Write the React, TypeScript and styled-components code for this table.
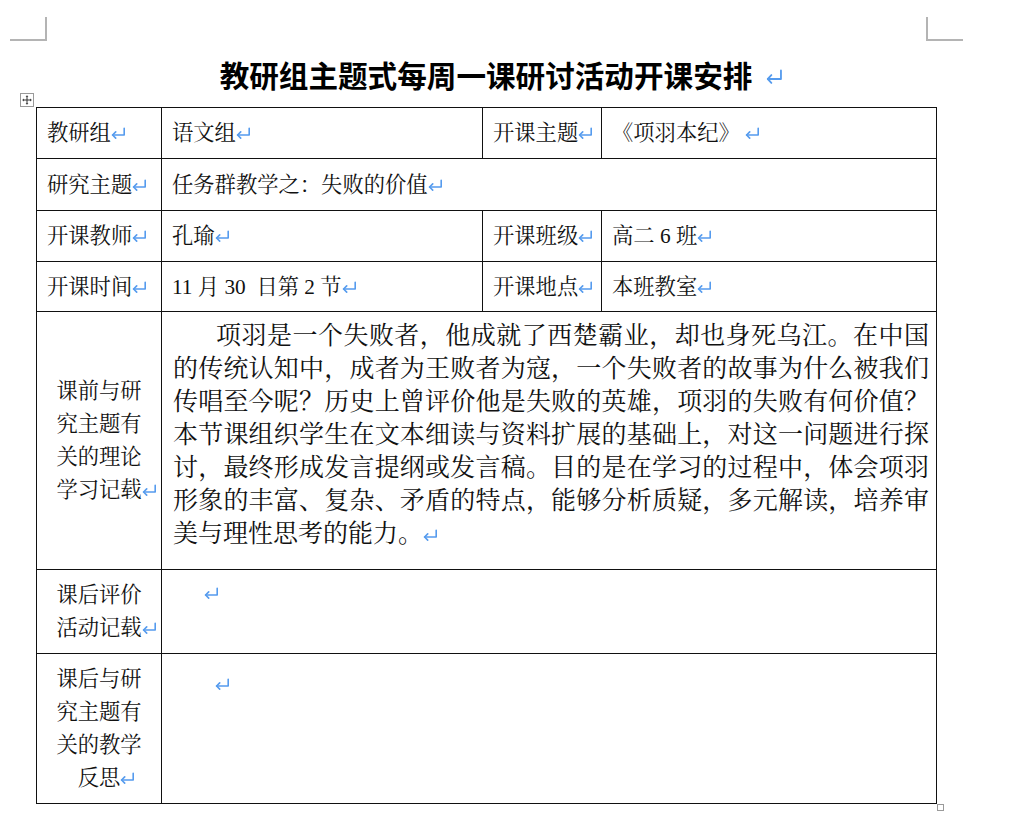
import React from "react";
import styled, { createGlobalStyle } from "styled-components";

const GlobalStyle = createGlobalStyle`
  html, body { margin: 0; padding: 0; background: #ffffff; }
  body {
    font-family: "Liberation Serif", "Noto Serif CJK SC", "Noto Sans CJK SC", serif;
    color: #111;
  }
`;

const Page = styled.div`
  width: 1024px;
  height: 823px;
  padding-top: 17px;
  box-sizing: border-box;
  overflow: hidden;
`;

const MarksRow = styled.div`
  display: flex;
  justify-content: space-between;
  padding: 0 61px 0 10px;
  height: 24px;
`;

const CornerMark = styled.div<{ $side: "left" | "right" }>`
  width: 37px;
  height: 24px;
  box-sizing: border-box;
  border-bottom: 2px solid #b4b4b4;
  ${(p) =>
    p.$side === "left"
      ? "border-right: 2px solid #b4b4b4;"
      : "border-left: 2px solid #b4b4b4;"}
`;

const Content = styled.div`
  margin-left: 36px;
  width: 900px;
`;

const Title = styled.h1`
  margin: 14px 0 0;
  height: 40px;
  line-height: 40px;
  text-align: center;
  font-family: "Noto Sans CJK SC", sans-serif;
  font-weight: 700;
  font-size: 29.6px;
  color: #000;
  white-space: nowrap;
`;

const TableWrap = styled.div`
  position: relative;
  margin-top: 12px;
`;

const MoveHandle = styled.svg`
  position: absolute;
  left: -16px;
  top: -14px;
  width: 14px;
  height: 14px;
`;

const ResizeHandle = styled.div`
  position: absolute;
  left: 901px;
  top: 697px;
  width: 7px;
  height: 7px;
  box-sizing: border-box;
  border: 1px solid #9a9a9a;
  background: #fff;
`;

const Table = styled.table`
  width: 900px;
  border-collapse: collapse;
  table-layout: fixed;
`;

const Row = styled.tr<{ $h: number }>`
  height: ${(p) => p.$h}px;
`;

const Cell = styled.td<{ $center?: boolean }>`
  border: 1.5px solid #111;
  padding: 0 10px;
  font-size: 21.3px;
  line-height: 30px;
  vertical-align: middle;
  text-align: ${(p) => (p.$center ? "center" : "left")};
  color: #111;
  white-space: pre;
`;

const StackLabel = styled.td`
  border: 1.5px solid #111;
  padding: 0 14px;
  font-size: 21.3px;
  line-height: 33px;
  vertical-align: middle;
  text-align: center;
  color: #111;
`;

const ParagraphCell = styled.td`
  border: 1.5px solid #111;
  padding: 7px 7px 0 11px;
  font-size: 25px;
  line-height: 33px;
  vertical-align: top;
  text-align: justify;
  text-indent: 43px;
  color: #111;
`;

const EmptyCell = styled.td<{ $indent: number; $top: number }>`
  border: 1.5px solid #111;
  padding: ${(p) => p.$top}px 10px 0 ${(p) => 11 + p.$indent}px;
  font-size: 21px;
  line-height: 33px;
  vertical-align: top;
`;

const MarkSvg = styled.svg<{ $hang?: boolean; $big?: boolean }>`
  display: inline-block;
  width: ${(p) => (p.$big ? 17 : 15)}px;
  height: ${(p) => (p.$big ? 15 : 12)}px;
  vertical-align: ${(p) => (p.$big ? 3 : 1)}px;
  margin-left: ${(p) => (p.$big ? 14 : 0)}px;
  margin-right: ${(p) => (p.$big ? -31 : p.$hang ? -15 : 0)}px;
  text-indent: 0;
`;

const Ret = ({ hang, big }: { hang?: boolean; big?: boolean }) => (
  <MarkSvg
    $hang={hang}
    $big={big}
    viewBox="0 0 15 12"
    preserveAspectRatio="none"
    fill="none"
    stroke="#559bee"
    strokeWidth={1.6}
    strokeLinecap="round"
    strokeLinejoin="round"
  >
    <path d="M13.2 1.2 V8 H1.6" />
    <path d="M4.7 4.9 L1.6 8 L4.7 11.1" />
  </MarkSvg>
);

export default function App() {
  return (
    <>
      <GlobalStyle />
      <Page>
        <MarksRow>
          <CornerMark $side="left" />
          <CornerMark $side="right" />
        </MarksRow>
        <Content>
          <Title>
            教研组主题式每周一课研讨活动开课安排
            <Ret big />
          </Title>
          <TableWrap>
            <MoveHandle viewBox="0 0 14 14">
              <rect x="0.5" y="0.5" width="13" height="13" fill="#fff" stroke="#9a9a9a" />
              <path d="M7 3 V11 M3 7 H11" stroke="#333" strokeWidth="1" />
              <path d="M7 2.2 L5.6 3.8 H8.4 Z M7 11.8 L5.6 10.2 H8.4 Z M2.2 7 L3.8 5.6 V8.4 Z M11.8 7 L10.2 5.6 V8.4 Z" fill="#333" />
            </MoveHandle>
            <Table>
              <colgroup>
                <col style={{ width: 125 }} />
                <col style={{ width: 321 }} />
                <col style={{ width: 119 }} />
                <col style={{ width: 335 }} />
              </colgroup>
              <tbody>
                <Row $h={51}>
                  <Cell>
                    教研组<Ret />
                  </Cell>
                  <Cell>
                    语文组<Ret />
                  </Cell>
                  <Cell>
                    开课主题<Ret />
                  </Cell>
                  <Cell>
                    《项羽本纪》 <Ret />
                  </Cell>
                </Row>
                <Row $h={52}>
                  <Cell>
                    研究主题<Ret />
                  </Cell>
                  <Cell colSpan={3}>
                    任务群教学之：失败的价值<Ret />
                  </Cell>
                </Row>
                <Row $h={51}>
                  <Cell>
                    开课教师<Ret />
                  </Cell>
                  <Cell>
                    孔瑜<Ret />
                  </Cell>
                  <Cell>
                    开课班级<Ret />
                  </Cell>
                  <Cell>
                    高二 6 班<Ret />
                  </Cell>
                </Row>
                <Row $h={50}>
                  <Cell>
                    开课时间<Ret />
                  </Cell>
                  <Cell>
                    {"11 月 30  日第 2 节"}
                    <Ret />
                  </Cell>
                  <Cell>
                    开课地点<Ret />
                  </Cell>
                  <Cell>
                    本班教室<Ret />
                  </Cell>
                </Row>
                <Row $h={258}>
                  <StackLabel>
                    课前与研究主题有关的理论学习记载
                    <Ret hang />
                  </StackLabel>
                  <ParagraphCell colSpan={3}>
                    项羽是一个失败者，他成就了西楚霸业，却也身死乌江。在中国的传统认知中，成者为王败者为寇，一个失败者的故事为什么被我们传唱至今呢？历史上曾评价他是失败的英雄，项羽的失败有何价值？本节课组织学生在文本细读与资料扩展的基础上，对这一问题进行探讨，最终形成发言提纲或发言稿。目的是在学习的过程中，体会项羽形象的丰富、复杂、矛盾的特点，能够分析质疑，多元解读，培养审美与理性思考的能力。
                    <Ret />
                  </ParagraphCell>
                </Row>
                <Row $h={84}>
                  <StackLabel>
                    课后评价活动记载
                    <Ret hang />
                  </StackLabel>
                  <EmptyCell colSpan={3} $indent={31} $top={7}>
                    <Ret />
                  </EmptyCell>
                </Row>
                <Row $h={150}>
                  <StackLabel>
                    课后与研究主题有关的教学反思
                    <Ret hang />
                  </StackLabel>
                  <EmptyCell colSpan={3} $indent={42} $top={14}>
                    <Ret />
                  </EmptyCell>
                </Row>
              </tbody>
            </Table>
            <ResizeHandle />
          </TableWrap>
        </Content>
      </Page>
    </>
  );
}
